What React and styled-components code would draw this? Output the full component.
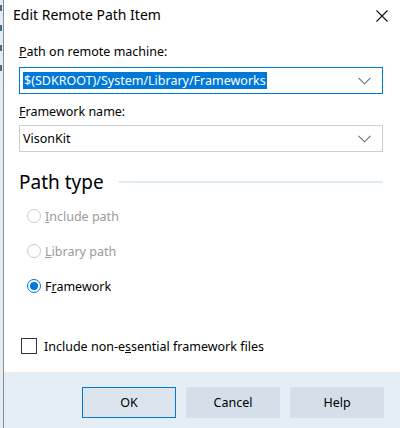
import React from "react";
import styled, { createGlobalStyle } from "styled-components";

const GlobalStyle = createGlobalStyle`
  html, body {
    margin: 0;
    padding: 0;
    background: #ffffff;
  }
  body {
    font-family: "Noto Sans", "Segoe UI", sans-serif;
    font-size: 12.5px;
    color: #000;
  }
`;

const Screen = styled.div`
  display: flex;
  width: 400px;
  height: 428px;
  overflow: hidden;
`;

const BackWindow = styled.div`
  width: 3px;
  background: #e4ecf3;
  display: flex;
  flex-direction: column;
  gap: 14px;
  padding-top: 5px;
  box-sizing: border-box;

  span {
    display: block;
    width: 2px;
    height: 6px;
    background: #4a6a8a;
  }
`;

const Dialog = styled.div`
  flex: 1;
  display: flex;
  flex-direction: column;
  border-left: 1px solid #8c8c8c;
  background: #fff;
`;

const TitleBar = styled.div`
  height: 31px;
  display: flex;
  align-items: center;
  justify-content: space-between;
  padding: 0 12px 0 9px;
`;

const Title = styled.div`
  font-size: 14px;
  line-height: 20px;
  margin-top: -2px;
`;

const Body = styled.div`
  flex: 1;
  padding: 12px 17px 0 15px;
  display: flex;
  flex-direction: column;
`;

const Label = styled.div`
  line-height: 18px;
  height: 18px;
  margin-bottom: ${(p) => p.gap}px;
`;

const Combo = styled.div`
  height: 27px;
  box-sizing: border-box;
  border: 1px solid ${(p) => (p.focused ? "#0078d7" : "#c5d0da")};
  display: flex;
  align-items: center;
  padding: 0 11px 0 2px;
  margin-bottom: ${(p) => p.gap || 0}px;
`;

const ComboText = styled.div`
  flex: 1;
  line-height: 18px;
  padding-left: 1px;
`;

const Selected = styled.span`
  background: #0078d7;
  color: #fff;
  padding: 0 1px;
`;

const Heading = styled.div`
  display: flex;
  align-items: center;
  margin-top: 18px;
  margin-bottom: 11px;
`;

const HeadingText = styled.div`
  font-size: 19px;
  line-height: 24px;
  white-space: nowrap;
`;

const HeadingRule = styled.div`
  flex: 1;
  height: 2px;
  background: #dde9f4;
  margin-left: 15px;
`;

const RadioRow = styled.div`
  display: flex;
  align-items: center;
  height: 22px;
  margin-bottom: 13px;
  padding-left: 8px;
  color: ${(p) => (p.disabled ? "#9a9a9a" : "#000")};
`;

const RadioCircle = styled.div`
  width: 14px;
  height: 14px;
  box-sizing: border-box;
  border-radius: 50%;
  border: 1px solid ${(p) => (p.checked ? "#0078d7" : p.disabled ? "#c8c8c8" : "#333")};
  display: flex;
  align-items: center;
  justify-content: center;
  margin-right: 4px;

  &::after {
    content: "";
    display: ${(p) => (p.checked ? "block" : "none")};
    width: 8px;
    height: 8px;
    border-radius: 50%;
    background: #0078d7;
  }
`;

const CheckRow = styled.div`
  display: flex;
  align-items: center;
  height: 18px;
  margin-top: 27px;
  padding-left: 2px;
`;

const CheckBox = styled.div`
  width: 16px;
  height: 16px;
  box-sizing: border-box;
  border: 1px solid #333;
  margin-right: 7px;
`;

const Footer = styled.div`
  height: 56px;
  background: #e6eef5;
  display: flex;
  justify-content: flex-end;
  align-items: flex-start;
  gap: 10px;
  padding: 15px 16px 0 0;
  box-sizing: border-box;
`;

const Button = styled.div`
  width: 94px;
  height: 31px;
  box-sizing: border-box;
  background: ${(p) => (p.primary ? "#dce5ee" : "#d4dfe9")};
  border: 1px solid ${(p) => (p.primary ? "#0078d7" : "#d4dfe9")};
  display: flex;
  align-items: center;
  justify-content: center;
`;

const Chevron = () => (
  <svg width="13" height="8" viewBox="0 0 13 8">
    <polyline points="0.5,0.8 6.5,6.8 12.5,0.8" fill="none" stroke="#6a6a6a" strokeWidth="1.1" />
  </svg>
);

const CloseIcon = () => (
  <svg width="12" height="12" viewBox="0 0 12 12">
    <path d="M0.5 0.5 L11.5 11.5 M11.5 0.5 L0.5 11.5" stroke="#111" strokeWidth="1.1" />
  </svg>
);

function Radio({ label, access, checked, disabled }) {
  const i = label.indexOf(access);
  return (
    <RadioRow disabled={disabled}>
      <RadioCircle checked={checked} disabled={disabled} />
      <span>
        {label.slice(0, i)}
        <u>{access}</u>
        {label.slice(i + 1)}
      </span>
    </RadioRow>
  );
}

export default function App() {
  return (
    <>
      <GlobalStyle />
      <Screen>
        <BackWindow>
          <span />
          <span />
          <span />
          <span />
        </BackWindow>
        <Dialog>
          <TitleBar>
            <Title>Edit Remote Path Item</Title>
            <CloseIcon />
          </TitleBar>
          <Body>
            <Label gap={6}>
              <u>P</u>ath on remote machine:
            </Label>
            <Combo focused gap={9}>
              <ComboText>
                <Selected>$(SDKROOT)/System/Library/Frameworks</Selected>
              </ComboText>
              <Chevron />
            </Combo>
            <Label gap={4}>
              <u>F</u>ramework name:
            </Label>
            <Combo>
              <ComboText>VisonKit</ComboText>
              <Chevron />
            </Combo>
            <Heading>
              <HeadingText>Path type</HeadingText>
              <HeadingRule />
            </Heading>
            <Radio label="Include path" access="I" disabled />
            <Radio label="Library path" access="L" disabled />
            <Radio label="Framework" access="r" checked />
            <CheckRow>
              <CheckBox />
              <span>
                Include non-e<u>s</u>sential framework files
              </span>
            </CheckRow>
          </Body>
          <Footer>
            <Button primary>OK</Button>
            <Button>Cancel</Button>
            <Button>Help</Button>
          </Footer>
        </Dialog>
      </Screen>
    </>
  );
}
